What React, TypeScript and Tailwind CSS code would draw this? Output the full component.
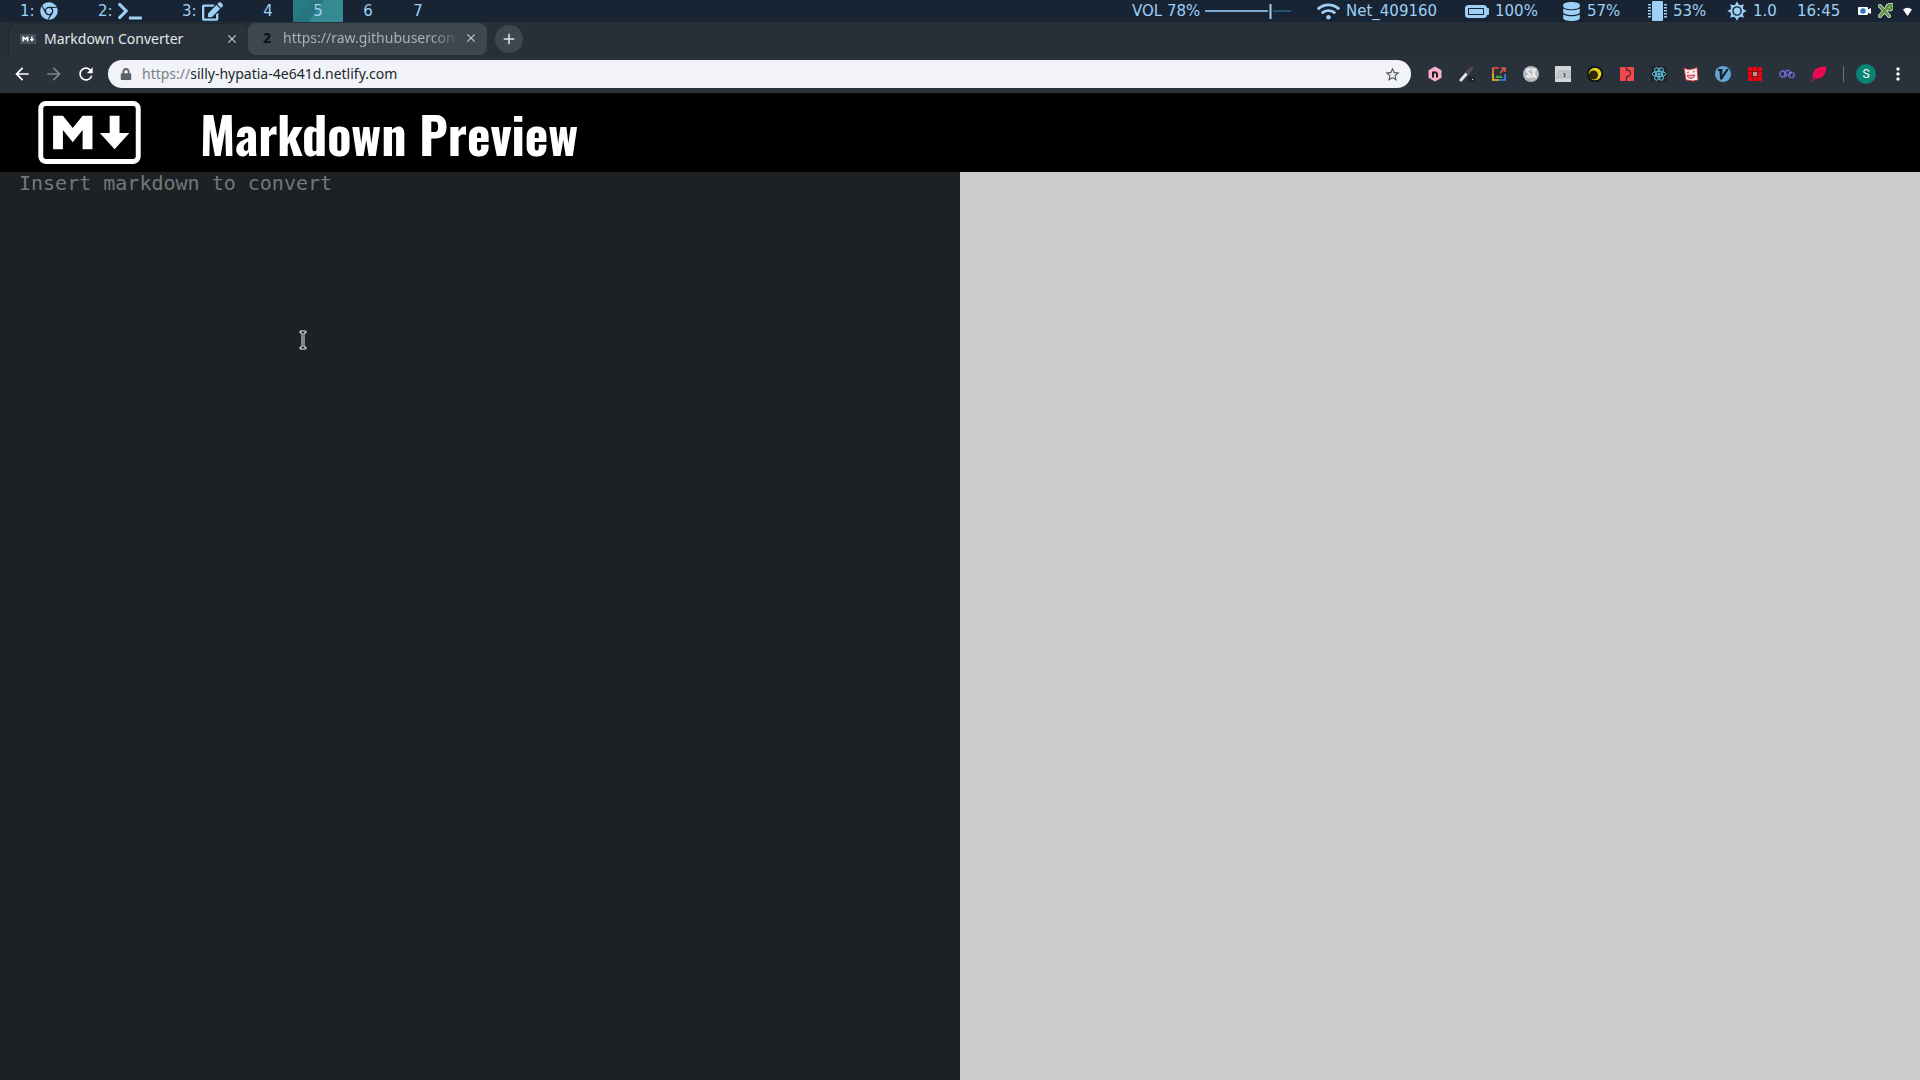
import type { ReactNode } from "react";
import { FaChrome, FaTerminal, FaEdit, FaWifi, FaDatabase, FaLock } from "react-icons/fa";
import { MdArrowBack, MdArrowForward, MdRefresh, MdStarBorder, MdMoreVert, MdClose, MdAdd } from "react-icons/md";

const MARK_PATH =
  "M30 98V30h20l20 25 20-25h20v68H90V59L70 84 50 59v39zm125 0l-30-33h20V30h20v35h20z";

function Workspace({ label, width, active, children }: { label: string; width: string; active?: boolean; children?: ReactNode }) {
  return (
    <button
      className={`${width} flex h-full shrink-0 items-center gap-[5px] ${children ? "pl-5" : "justify-center"} ${
        active ? "bg-[linear-gradient(125deg,#2a7f89_0%,#24727c_45%,#358b94_50%,#358b94_100%)]" : ""
      }`}
    >
      {label}
      {children}
    </button>
  );
}

function BatteryIcon() {
  return (
    <svg width="24" height="13" viewBox="0 0 24 13" aria-hidden="true">
      <rect x="1.5" y="1.5" width="19" height="10" rx="2" fill="none" stroke="currentColor" strokeWidth="3" />
      <path d="M21 3h2a1 1 0 0 1 1 1v5a1 1 0 0 1-1 1h-2z" fill="currentColor" />
      <rect x="4" y="4" width="14" height="5" fill="currentColor" />
    </svg>
  );
}

function ChipIcon() {
  return (
    <svg width="19" height="20" viewBox="0 0 19 20" aria-hidden="true" fill="currentColor">
      <rect x="4" y="0" width="11" height="20" rx="1" />
      {[3, 6, 9, 12, 15].map((y) => (
        <g key={y}>
          <path d={`M0 ${y}h3v1.500H0z`} />
          <path d={`M16 ${y}h3v1.500h-3z`} />
        </g>
      ))}
    </svg>
  );
}

function SunIcon() {
  return (
    <svg width="20" height="20" viewBox="0 0 20 20" aria-hidden="true">
      <g fill="currentColor">
        {[0, 45, 90, 135, 180, 225, 270, 315].map((a) => (
          <path key={a} d="M10 0.3L12.6 5H7.4z" transform={`rotate(${a} 10 10)`} />
        ))}
        <circle cx="10" cy="10" r="6.6" />
      </g>
      <circle cx="10" cy="10" r="4.1" fill="none" stroke="#182434" strokeWidth="1.4" />
    </svg>
  );
}

function StatusBar() {
  return (
    <header className="flex h-[22px] items-center bg-[#182434] font-['DejaVu_Sans',sans-serif] text-[15px] leading-[22px] text-[#9ecff5]">
      <nav aria-label="Workspaces" className="flex h-full items-center">
        <Workspace label="1:" width="w-[78px]"><FaChrome size={18} /></Workspace>
        <Workspace label="2:" width="w-[84px]"><FaTerminal size={24} /></Workspace>
        <Workspace label="3:" width="w-[81px]"><FaEdit size={21} /></Workspace>
        <Workspace label="4" width="w-[50px]" />
        <Workspace label="5" width="w-[50px]" active />
        <Workspace label="6" width="w-[50px]" />
        <Workspace label="7" width="w-[50px]" />
      </nav>
      <div className="ml-auto flex h-full items-center pr-[3px]">
        <span className="flex w-[185px] items-center gap-[5px]">
          VOL 78%
          <svg width="86" height="16" viewBox="0 0 86 16" aria-hidden="true">
            <path d="M0 8h63" stroke="#7fa9cc" strokeWidth="2" />
            <path d="M68 8h18" stroke="#27506f" strokeWidth="2" />
            <path d="M65.500 1v15" stroke="#9ecff5" strokeWidth="2" />
          </svg>
        </span>
        <span className="flex w-[148px] items-center gap-1.5"><FaWifi size={23} />Net_409160</span>
        <span className="flex w-[97px] items-center gap-1.5"><BatteryIcon />100%</span>
        <span className="flex w-[86px] items-center gap-1.5"><FaDatabase size={19} />57%</span>
        <span className="flex w-[79px] items-center gap-1.5"><ChipIcon />53%</span>
        <span className="flex w-[70px] items-center gap-1.5"><SunIcon />1.0</span>
        <span className="w-[61px]">16:45</span>
        <span className="flex items-center gap-1.5">
          <svg width="14" height="10" viewBox="0 0 14 10" aria-hidden="true">
            <rect y="1" width="10" height="8" rx="1" fill="#fff" />
            <path d="M9 4l4-2v6l-4-2z" fill="#fff" />
            <circle cx="5" cy="5" r="2.700" fill="#3272c4" />
          </svg>
          <svg width="15" height="16" viewBox="0 0 15 16" aria-hidden="true" fill="none" strokeLinecap="round">
            <path d="M2 3l9 10M2 13l7-8M9 5c0-3 2-3 4-3-2 2 1 2 1 3-1 2-3 2-5 0z" stroke="#e4efdc" strokeWidth="4" />
            <path d="M2 3l9 10M2 13l7-8M9 5c0-3 2-3 4-3-2 2 1 2 1 3-1 2-3 2-5 0z" stroke="#5c9142" strokeWidth="2.500" />
          </svg>
          <svg width="18" height="9" viewBox="0 0 18 9" aria-hidden="true">
            <path d="M4 2.500Q8.500-1 13 2.500L8.500 9z" fill="#fff" />
          </svg>
        </span>
      </div>
    </header>
  );
}

function Tabs() {
  return (
    <div className="flex h-[35px] items-start bg-[#273038] pl-2 pt-px text-sm leading-7">
      <div className="flex h-[34px] w-60 items-center rounded-t-lg border-l border-t border-[#1f272e] bg-[#29323a] pb-1 pl-[11px] pr-[9px] text-[#e3e7ea]">
        <svg width="16" height="10" viewBox="0 0 208 128" className="mr-2 shrink-0" aria-hidden="true">
          <rect width="208" height="128" rx="8" fill="#46525b" />
          <path d={MARK_PATH} fill="#fff" />
        </svg>
        <span className="flex-1 whitespace-nowrap">Markdown Converter</span>
        <button aria-label="Close Markdown Converter" className="text-[#c3c9cd]"><MdClose size={14} /></button>
      </div>
      <div className="flex h-8 w-[239px] items-center rounded-lg bg-[#3c474f] pb-0.5 pl-[15px] pr-[9px] text-[#a9b1b6]">
        <span className="w-5 shrink-0 font-bold text-[#0b0f12]">2</span>
        <span className="flex-1 whitespace-nowrap [mask-image:linear-gradient(to_right,black_82%,transparent_98%)]">
          https://raw.githubusercon
        </span>
        <button aria-label="Close raw.githubusercontent.com" className="text-[#c3c9cd]"><MdClose size={14} /></button>
      </div>
      <button aria-label="New tab" className="ml-2 mt-0.5 flex size-7 items-center justify-center rounded-full bg-[#3c474f] text-[#dfe3e6]">
        <MdAdd size={18} />
      </button>
    </div>
  );
}

function Extension({ name, children }: { name: string; children: ReactNode }) {
  return (
    <button aria-label={name} className="flex w-8 items-center justify-center">
      <svg width="16" height="16" viewBox="0 0 16 16" aria-hidden="true">{children}</svg>
    </button>
  );
}

function Extensions() {
  return (
    <div className="flex items-center">
      <Extension name="Hexagon">
        <path d="M8 .5l6.500 3.700v7.600L8 15.500l-6.500-3.700V4.200z" fill="#f6b0c8" />
        <path d="M6 11.500V5.500M6 7.500q2-2.500 4 0v4" stroke="#241a20" strokeWidth="2" fill="none" />
      </Extension>
      <Extension name="Color picker">
        <path d="M2 14l7-8" stroke="#dfe6ea" strokeWidth="3" strokeLinecap="round" />
        <path d="M8.500 6.500l4-4" stroke="#54484b" strokeWidth="3.500" strokeLinecap="round" />
        <rect x="9" y="10" width="7" height="6" rx="1" fill="#20262c" />
        <rect x="13" y="13" width="1" height="1" fill="#fff" />
      </Extension>
      <Extension name="Screenshot">
        <g fill="none" strokeWidth="1.600">
          <path d="M2 9V2" stroke="#f08a3c" /><path d="M1.200 2H8" stroke="#ea4335" />
          <path d="M2 8v6h6" stroke="#fbc02d" /><path d="M8 14h6V8" stroke="#4285f4" />
          <path d="M9 7l4.500-4.500M10 2h4v4" stroke="#e5564c" />
        </g>
        <path d="M4 12l2.500-3 1.500 1.500L9.500 9l2.500 3z" fill="#34a853" />
      </Extension>
      <Extension name="SX">
        <circle cx="8" cy="8" r="8" fill="#b5b8ba" />
        <text x="8" y="12" textAnchor="middle" fontSize="11" fontWeight="700" fontFamily="Oswald, Liberation Sans, sans-serif" fill="#eceeef">SX</text>
      </Extension>
      <Extension name="Counter">
        <rect width="16" height="16" fill="#d3d5d6" />
        <path d="M1 12L4 5h11v7z" fill="#c2c5c6" stroke="#aeb1b3" strokeWidth=".7" />
        <text x="9.500" y="11" textAnchor="middle" fontSize="7" fontWeight="700" fontFamily="Liberation Serif, serif" fill="#333">1</text>
      </Extension>
      <Extension name="Dark theme">
        <circle cx="8" cy="8" r="8" fill="#0c0d0c" />
        <circle cx="8" cy="8" r="6.300" fill="#e9cf16" />
        <circle cx="6.500" cy="9" r="4.600" fill="#2a280f" />
      </Extension>
      <Extension name="Puzzle">
        <rect x="1" y="1" width="14" height="14" rx="1" fill="#f5484d" />
        <path d="M7.500 1v3q4 0 4 3t-4 4v4" stroke="#5c2b33" strokeWidth="1.400" fill="none" />
      </Extension>
      <Extension name="React Developer Tools">
        <rect width="16" height="16" fill="#20262b" />
        <g fill="none" stroke="#61c4dd" strokeWidth="1">
          <ellipse cx="8" cy="8" rx="6.800" ry="2.700" />
          <ellipse cx="8" cy="8" rx="6.800" ry="2.700" transform="rotate(60 8 8)" />
          <ellipse cx="8" cy="8" rx="6.800" ry="2.700" transform="rotate(120 8 8)" />
        </g>
        <circle cx="8" cy="8" r="1.500" fill="#61c4dd" />
      </Extension>
      <Extension name="Comic">
        <path d="M1 2l4 1.500 5-.5 4-1.500 1 12.500-5 1-7-1z" fill="#f8efef" stroke="#d52b36" strokeWidth=".8" />
        <path d="M4 7l2-1m4 0l2-.5M4 9.500l8-.5q-1 3.500-4 3.500T4 9.500z" stroke="#c92c38" strokeWidth=".9" fill="#f1b4b8" />
      </Extension>
      <Extension name="Vimium">
        <circle cx="8" cy="8" r="8" fill="#67a5d3" />
        <path d="M3 3h4.500v1L7 9l4-5V3h3L7 13.500H5L4.500 5H3z" fill="#17242f" />
      </Extension>
      <Extension name="Grid">
        <rect x="1" y="1" width="14" height="14" fill="#e30613" />
        <path d="M1 5.500h14M1 10.500h14M5.500 1v14M10.500 1v14" stroke="#8a0b10" strokeWidth=".8" />
        <rect x="6" y="6" width="4" height="4" fill="#a39b98" />
      </Extension>
      <Extension name="Gears">
        <g fill="none" stroke="#7476ea" strokeDasharray="1.500 .7">
          <circle cx="3.800" cy="8" r="2.900" strokeWidth="2" />
          <circle cx="8.500" cy="7" r="2.700" strokeWidth="1.800" />
          <circle cx="12.500" cy="9" r="2.600" strokeWidth="1.800" />
        </g>
      </Extension>
      <Extension name="Feather">
        <path d="M2 12Q0 4 8 1.500q4-1 7.500-1Q15 10 9 12q-3 1-5 .5L1.500 15.500l-.8-.5z" fill="#f00a55" />
        <path d="M2 14Q5 8 11 4" stroke="#a30a40" strokeWidth=".7" fill="none" />
      </Extension>
    </div>
  );
}

function Toolbar() {
  return (
    <div className="flex h-9 items-center bg-[#29323a] pb-0.5 text-white">
      <div className="flex w-[108px] shrink-0 items-center gap-3 pl-3">
        <button aria-label="Back"><MdArrowBack size={20} /></button>
        <button aria-label="Forward" className="text-[#7c868c]"><MdArrowForward size={20} /></button>
        <button aria-label="Reload"><MdRefresh size={20} /></button>
      </div>
      <div className="flex h-7 flex-1 items-center rounded-full bg-[#f1f3f8] pl-3 pr-2.5 text-sm text-[#22272b]">
        <FaLock size={12} className="mr-2.5 shrink-0 text-[#5c6064]" />
        <label htmlFor="address" className="text-[#7b8084]">https://</label>
        <input id="address" defaultValue="silly-hypatia-4e641d.netlify.com" className="min-w-0 flex-1 bg-transparent outline-none" />
        <button aria-label="Bookmark this page" className="text-[#555a5e]"><MdStarBorder size={17} /></button>
      </div>
      <div className="flex shrink-0 items-center pl-2">
        <Extensions />
        <span className="ml-2 h-4 w-px bg-[#69737a]" />
        <button aria-label="Account" className="ml-3 flex size-5 items-center justify-center rounded-full bg-[#098474] font-['Roboto',sans-serif] text-xs">S</button>
        <button aria-label="Menu" className="ml-3 mr-3"><MdMoreVert size={20} /></button>
      </div>
    </div>
  );
}

export default function App() {
  return (
    <div className="flex h-screen flex-col overflow-hidden font-['Noto_Sans',sans-serif]">
      <StatusBar />
      <Tabs />
      <Toolbar />
      <div className="flex h-[79px] shrink-0 items-center gap-[59px] bg-black pl-[38px] text-white">
        <svg width="103" height="63" viewBox="0 0 208 128" role="img" aria-label="Markdown" className="mb-px shrink-0">
          <rect x="5" y="5" width="198" height="118" rx="10" fill="none" stroke="currentColor" strokeWidth="10" />
          <path d={MARK_PATH} fill="currentColor" />
        </svg>
        <h1 className="whitespace-nowrap font-['Oswald','Liberation_Sans_Narrow',sans-serif] text-[50px] font-bold leading-[72px]">
          Markdown Preview
        </h1>
      </div>
      <main className="grid min-h-0 flex-1 grid-cols-2">
        <textarea
          aria-label="Markdown source"
          placeholder="Insert markdown to convert"
          className="resize-none bg-[#1d2124] px-[19px] font-['DejaVu_Sans_Mono',monospace] text-[20px] leading-[22px] text-gray-200 outline-none placeholder:text-[#73777a]"
        />
        <section aria-label="Preview" className="bg-[#cdcacd]" />
      </main>
      <svg width="8" height="20" viewBox="0 0 8 20" aria-hidden="true" className="pointer-events-none absolute left-[299px] top-[330px]">
        <path d="M1 1h6v2H5v14h2v2H1v-2h2V3H1z" fill="#1d2124" stroke="#e8eeee" strokeWidth="1" />
      </svg>
    </div>
  );
}
